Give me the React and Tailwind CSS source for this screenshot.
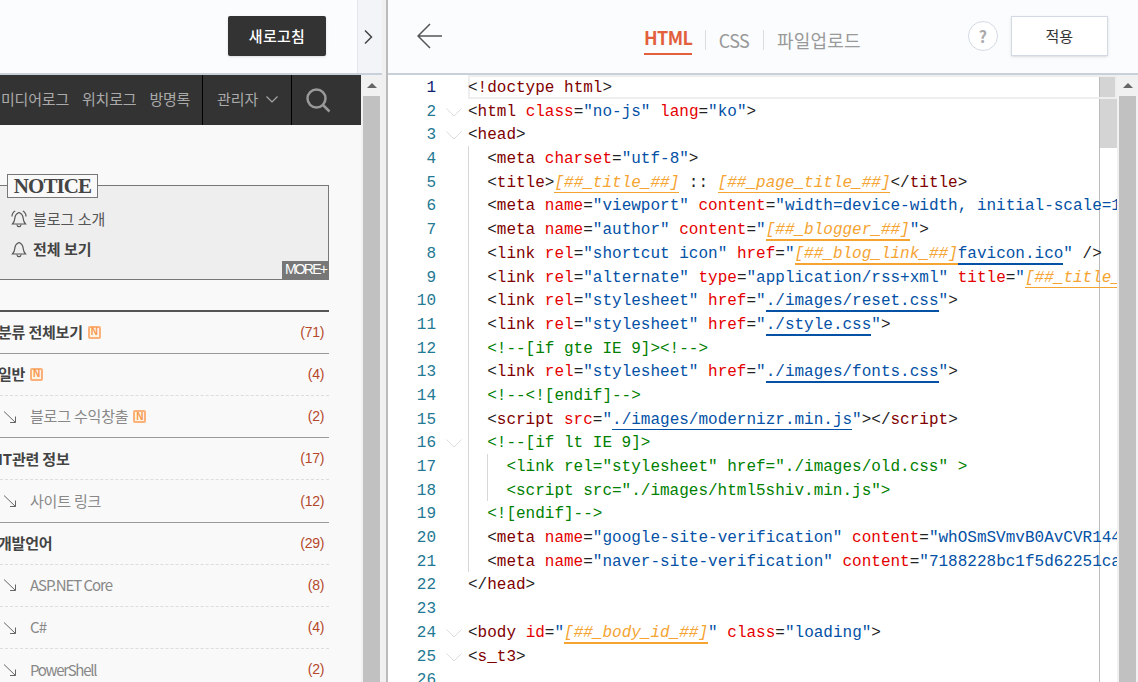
import React from "react";

const KR = "font-['Noto_Sans_CJK_KR','Noto_Sans',sans-serif]";

const T = ({ children }) => <span className="text-[#800000]">{children}</span>;
const A = ({ children }) => <span className="text-[#e50000]">{children}</span>;
const S = ({ children }) => <span className="text-[#0451a5]">{children}</span>;
const U = ({ children }) => (
  <span className="text-[#0451a5] border-b-2 border-[#0451a5]">{children}</span>
);
const P = ({ children }) => (
  <span className="text-[#f5a431] italic border-b-2 border-[#f5a431]">{children}</span>
);
const C = ({ children }) => <span className="text-[#008000]">{children}</span>;

const lines = [
  { indent: 0, code: <>&lt;<T>!doctype html</T>&gt;</> },
  { indent: 0, fold: true, code: <>&lt;<T>html</T> <A>class</A>=<S>"no-js"</S> <A>lang</A>=<S>"ko"</S>&gt;</> },
  { indent: 0, fold: true, code: <>&lt;<T>head</T>&gt;</> },
  { indent: 1, code: <>&lt;<T>meta</T> <A>charset</A>=<S>"utf-8"</S>&gt;</> },
  { indent: 1, code: <>&lt;<T>title</T>&gt;<P>[##_title_##]</P> :: <P>[##_page_title_##]</P>&lt;/<T>title</T>&gt;</> },
  { indent: 1, code: <>&lt;<T>meta</T> <A>name</A>=<S>"viewport"</S> <A>content</A>=<S>"width=device-width, initial-scale=1"</S>&gt;</> },
  { indent: 1, code: <>&lt;<T>meta</T> <A>name</A>=<S>"author"</S> <A>content</A>=<S>"</S><P>[##_blogger_##]</P><S>"</S>&gt;</> },
  { indent: 1, code: <>&lt;<T>link</T> <A>rel</A>=<S>"shortcut icon"</S> <A>href</A>=<S>"</S><P>[##_blog_link_##]</P><U>favicon.ico</U><S>"</S> /&gt;</> },
  { indent: 1, code: <>&lt;<T>link</T> <A>rel</A>=<S>"alternate"</S> <A>type</A>=<S>"application/rss+xml"</S> <A>title</A>=<S>"</S><P>[##_title_##]</P><S>"</S>&gt;</> },
  { indent: 1, code: <>&lt;<T>link</T> <A>rel</A>=<S>"stylesheet"</S> <A>href</A>=<S>"</S><U>./images/reset.css</U><S>"</S>&gt;</> },
  { indent: 1, code: <>&lt;<T>link</T> <A>rel</A>=<S>"stylesheet"</S> <A>href</A>=<S>"</S><U>./style.css</U><S>"</S>&gt;</> },
  { indent: 1, code: <C>&lt;!--[if gte IE 9]&gt;&lt;!--&gt;</C> },
  { indent: 1, code: <>&lt;<T>link</T> <A>rel</A>=<S>"stylesheet"</S> <A>href</A>=<S>"</S><U>./images/fonts.css</U><S>"</S>&gt;</> },
  { indent: 1, code: <C>&lt;!--&lt;![endif]--&gt;</C> },
  { indent: 1, code: <>&lt;<T>script</T> <A>src</A>=<S>"</S><U>./images/modernizr.min.js</U><S>"</S>&gt;&lt;/<T>script</T>&gt;</> },
  { indent: 1, fold: true, code: <C>&lt;!--[if lt IE 9]&gt;</C> },
  { indent: 2, code: <C>&lt;link rel="stylesheet" href="./images/old.css" &gt;</C> },
  { indent: 2, code: <C>&lt;script src="./images/html5shiv.min.js"&gt;</C> },
  { indent: 1, code: <C>&lt;![endif]--&gt;</C> },
  { indent: 1, code: <>&lt;<T>meta</T> <A>name</A>=<S>"google-site-verification"</S> <A>content</A>=<S>"whOSmSVmvB0AvCVR144abc"</S>&gt;</> },
  { indent: 1, code: <>&lt;<T>meta</T> <A>name</A>=<S>"naver-site-verification"</S> <A>content</A>=<S>"7188228bc1f5d62251ca0a"</S>&gt;</> },
  { indent: 0, code: <>&lt;/<T>head</T>&gt;</> },
  { indent: 0, code: "" },
  { indent: 0, fold: true, code: <>&lt;<T>body</T> <A>id</A>=<S>"</S><P>[##_body_id_##]</P><S>"</S> <A>class</A>=<S>"loading"</S>&gt;</> },
  { indent: 0, fold: true, code: <>&lt;<T>s_t3</T>&gt;</> },
  { indent: 0, code: "" },
];

const categories = [
  { name: "분류 전체보기", count: 71, isNew: true, border: "border-[#999]" },
  { name: "일반", count: 4, isNew: true, border: "border-dashed border-[#ddd]" },
  { name: "블로그 수익창출", count: 2, isNew: true, sub: true, border: "border-[#999]" },
  { name: "IT관련 정보", count: 17, border: "border-dashed border-[#ddd]" },
  { name: "사이트 링크", count: 12, sub: true, border: "border-[#999]" },
  { name: "개발언어", count: 29, border: "border-dashed border-[#ddd]" },
  { name: "ASP.NET Core", count: 8, sub: true, latin: "tracking-[-1.050px]", border: "border-dashed border-[#ddd]" },
  { name: "C#", count: 4, sub: true, latin: "tracking-[-0.800px]", border: "border-dashed border-[#ddd]" },
  { name: "PowerShell", count: 2, sub: true, latin: "tracking-[-1.300px]", border: "border-dashed border-[#ddd]" },
];

const NewBadge = () => (
  <span className="ml-[5px] w-[13px] h-[13px] shrink-0 rounded-[2px] border-2 border-[#fbb27a] bg-[#fff3e6] flex items-center justify-center font-['Liberation_Sans',sans-serif] text-[10px] leading-none font-bold text-[#f59a4f]">
    N
  </span>
);

const Bell = ({ ring }) => (
  <svg width="16" height="18" viewBox="0 0 16 18" fill="none" stroke="#555" strokeWidth="1.200" className="shrink-0">
    <path d="M8 2.500C5.600 3.500 4 5.500 3.800 8.500 3.600 11 2.800 12.500 1.500 14h13c-1.300-1.500-2.100-3-2.300-5.500C12 5.500 10.400 3.500 8 2.500z" />
    <path d="M5.800 14.500c.3 1.500 1.100 2.200 2.200 2.200s1.900-.7 2.200-2.200" />
    {ring && <path d="M1 6.500C1 4 2.200 2 4.200 1M15 6.500C15 4 13.800 2 11.800 1" />}
  </svg>
);

const ScrollBar = () => (
  <div className="w-[21px] h-full shrink-0 bg-[#f1f1f1] flex flex-col items-center">
    <div className="h-[21px] w-full flex items-center justify-center">
      <div className="w-0 h-0 border-x-[5px] border-x-transparent border-b-[5px] border-b-[#666]" />
    </div>
    <div className="w-[17px] flex-1 bg-[#c1c1c1]" />
  </div>
);

const App = () => {
  return (
    <div className={`w-[1138px] h-[682px] flex overflow-hidden bg-white ${KR}`}>
      {/* left: blog preview */}
      <div className="w-[382px] h-full shrink-0 flex flex-col">
        <div className="h-[75px] shrink-0 flex bg-[#fbfcfe] border-b-2 border-[#c8d0da]">
          <div className="flex-1 flex justify-end items-start pt-4 pr-[31px]">
            <button className="w-[98px] h-10 rounded-[2px] bg-[#333] text-white text-[15px] tracking-[0.3px] font-medium shadow-sm">
              새로고침
            </button>
          </div>
          <div className="w-[25px] bg-[#f2f4f8] border-l border-[#e2e6ee] flex items-center justify-center pr-[4px]">
            <svg width="10" height="16" viewBox="0 0 10 16" fill="none" stroke="#444" strokeWidth="1.500">
              <path d="M2 1.500 8.500 8 2 14.500" />
            </svg>
          </div>
        </div>
        <div className="flex-1 min-h-0 flex">
          <div className="w-[361px] shrink-0 bg-[#f9f9f9] overflow-hidden">
            <div className="h-[50px] bg-[#333] flex items-stretch text-[#aaa] text-[15px]">
              <div className="w-[202px] flex items-center pl-px pb-[2px] gap-[13px] whitespace-nowrap tracking-[-0.2px]">
                <span>미디어로그</span>
                <span>위치로그</span>
                <span>방명록</span>
              </div>
              <div className="w-[90px] border-x border-black flex items-center pl-[14px] pb-[2px] gap-[8px]">
                <span>관리자</span>
                <svg width="12" height="7" viewBox="0 0 12 7" fill="none" stroke="#aaa" strokeWidth="1.100">
                  <path d="M.5.500 6 6l5.500-5.500" />
                </svg>
              </div>
              <div className="pl-[14px] flex items-center">
                <svg width="25" height="25" viewBox="0 0 25 25" fill="none" stroke="#999" strokeWidth="2.500">
                  <circle cx="10.500" cy="10.500" r="9" />
                  <path d="m17 17 6.500 6.500" />
                </svg>
              </div>
            </div>

            <div className="w-[329px] mt-[60px] h-[95px] relative border border-l-0 border-[#777] bg-[#eee]">
              <div className="absolute left-[7px] -top-[12px] w-[91px] h-6 pt-px border border-[#777] bg-[#f9f9f9] flex items-center justify-center font-['Liberation_Serif',serif] font-bold text-[21px] tracking-[-0.9px] text-[#444]">
                NOTICE
              </div>
              <div className="pt-[22px] pl-[11px] text-[15px] text-[#555]">
                <div className="h-[22px] flex items-center gap-[6px]">
                  <Bell ring />
                  <span>블로그 소개</span>
                </div>
                <div className="mt-2 h-[22px] flex items-center gap-[6px] font-bold text-[#444]">
                  <Bell />
                  <span>전체 보기</span>
                </div>
              </div>
              <div className="absolute right-[-1px] bottom-[-1px] w-[47px] h-[19px] bg-[#777] text-white text-[14px] leading-[17px] text-center tracking-[-1.800px] font-['Liberation_Sans',sans-serif]">
                MORE+
              </div>
            </div>

            <div className="w-[329px] mt-[29.7px] border-t-2 border-[#555]">
              {categories.map((c) => (
                <div key={c.name} className={`h-[42.2px] flex items-center border-b ${c.border}`}>
                  {c.sub ? (
                    <>
                      <svg width="14" height="14" viewBox="0 0 14 14" fill="none" stroke="#666" className="ml-[3px] shrink-0">
                        <path d="M1 1.500 12.500 12.500M12.500 6.500v6H7" />
                      </svg>
                      <span className={`ml-[13px] text-[15px] text-[#888] whitespace-nowrap ${c.latin || "tracking-[-0.2px]"}`}>{c.name}</span>
                    </>
                  ) : (
                    <span className="-ml-[2px] text-[15px] font-bold text-[#444] tracking-[-0.2px] whitespace-nowrap">{c.name}</span>
                  )}
                  {c.isNew && <NewBadge />}
                  <span className="ml-auto mr-[5px] font-['Liberation_Sans',sans-serif] text-[14px] text-[#b5482a] tracking-[-0.3px]">
                    ({c.count})
                  </span>
                </div>
              ))}
            </div>
          </div>
          <ScrollBar />
        </div>
      </div>

      {/* divider */}
      <div className="w-[6px] h-full shrink-0 bg-[#f0f0f0] border-r-2 border-[#bbb]" />

      {/* right: editor */}
      <div className="flex-1 min-w-0 h-full flex flex-col">
        <div className="h-[75px] shrink-0 flex items-start bg-[#fbfcfe] border-b-2 border-[#c8d0da]">
          <svg width="26" height="26" viewBox="0 0 26 26" fill="none" stroke="#555" strokeWidth="1.500" className="ml-[29px] mt-[23px] shrink-0">
            <path d="M25 13H2M13 1 1 13l12 12" />
          </svg>
          <div className="ml-[201px] mt-[24px] flex items-center text-[18px] leading-[26px] text-[#999]">
            <span className="h-[31px] border-b-2 border-[#e2603c] font-bold text-[#e2603c] w-[48px] text-center tracking-[-0.6px]">HTML</span>
            <span className="w-px h-[20px] ml-[13px] mr-[12px] bg-[#ddd]" />
            <span className="w-[32px] text-center tracking-[-0.6px]">CSS</span>
            <span className="w-px h-[20px] mx-[13px] bg-[#ddd]" />
            <span className="whitespace-nowrap tracking-[0.2px]">파일업로드</span>
          </div>
          <div className="ml-[107px] mt-[21px] w-[30px] h-[30px] rounded-full border border-[#d4dae3] bg-white flex items-center justify-center text-[16px] font-bold text-[#aaa]">
            ?
          </div>
          <button className="ml-[13px] mt-4 w-[97px] h-10 bg-white border border-[#d4dae3] shadow-sm text-[15px] text-[#333]">
            적용
          </button>
        </div>

        <div className="flex-1 min-h-0 flex">
          <div className="flex-1 min-w-0 relative overflow-hidden font-['Liberation_Mono',monospace] text-[16px] leading-[27px] text-[#222]">
            <div className="absolute left-[711px] top-0 bottom-0 w-px bg-[#bbb]" />
            <div className="absolute left-[712px] top-0 w-[17px] h-[73px] bg-[#d4d4d4]" />
            {lines.map((line, i) => (
              <div key={i} className="relative h-[23.7px] flex">
                <div className="w-[80px] shrink-0 flex">
                  <span className={`w-[48px] text-right ${i === 0 ? "text-[#0b216f]" : "text-[#237893]"}`}>{i + 1}</span>
                  {line.fold && (
                    <svg width="16" height="9" viewBox="0 0 16 9" fill="none" stroke="#ddd" className="ml-[10px] mt-[9px]">
                      <path d="M.5.500 8 8 15.500.500" />
                    </svg>
                  )}
                </div>
                <div className={`w-[649px] overflow-hidden whitespace-pre flex ${i === 0 ? "shadow-[inset_0_0_0_2px_#eee]" : ""}`}>
                  {line.indent > 0 && <span className="w-[19.2px] shrink-0 border-l border-[#d8d8d8]" />}
                  {line.indent > 1 && <span className="w-[19.2px] shrink-0 border-l border-[#d8d8d8]" />}
                  <span>{line.code}</span>
                </div>
              </div>
            ))}
          </div>
          <ScrollBar />
        </div>
      </div>
    </div>
  );
};

export default App;
